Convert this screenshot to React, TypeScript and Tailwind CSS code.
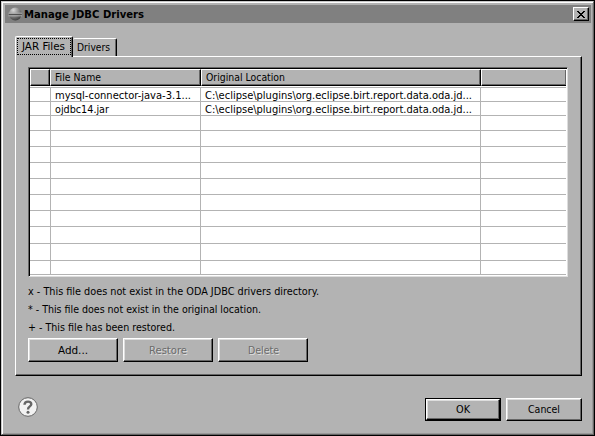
import React from "react";

const T = ({ w, children, className = "" }: { w: number; children: string; className?: string }) => (
  <svg width={w} height="15" className={"block shrink-0 overflow-visible " + className} fill="currentColor">
    <text x="0" y="11" textLength={w} lengthAdjust="spacingAndGlyphs">{children}</text>
  </svg>
);

const Btn = ({ label, w, className = "", disabled = false }: { label: string; w: number; className?: string; disabled?: boolean }) => (
  <button
    className={
      "flex items-center justify-center border border-t-white border-l-white border-r-black border-b-black shadow-[inset_-1px_-1px_0_#666,inset_1px_1px_0_#ddd] " +
      (disabled ? "text-[#6b6b6b] [text-shadow:1px_1px_0_#ddd] " : "text-black ") + className
    }
  >
    <T w={w}>{label}</T>
  </button>
);

const Head = ({ label, w = 0, className = "" }: { label?: string; w?: number; className?: string }) => (
  <div className={"flex h-[17px] shrink-0 items-center border border-t-white border-l-white border-r-black border-b-black bg-[#b3b3b3] pl-1 shadow-[inset_-1px_-1px_0_#666] " + className}>
    {label && <T w={w}>{label}</T>}
  </div>
);

const files = [
  ["mysql-connector-java-3.1...", 136],
  ["ojdbc14.jar", 54],
] as const;

const rowHeights = [
  "h-[14px]", "h-[14px]", "h-[15px]", "h-[16px]", "h-[16px]", "h-[16px]",
  "h-[16px]", "h-[16px]", "h-[16px]", "h-[17px]", "h-[17px]", "h-[14px]",
];

export default function App() {
  return (
    <div className="h-[436px] w-[595px] overflow-hidden border border-black bg-[#b3b3b3] font-['DejaVu_Sans_Condensed','DejaVu_Sans',sans-serif] text-[11px] leading-[14px] text-black">
      <div className="flex h-full flex-col border border-t-[#c8c8c8] border-l-[#c8c8c8] border-r-[#666] border-b-[#666] pt-[3px] pr-[2px] pl-[3px] shadow-[inset_1px_1px_0_#fff,inset_-1px_-1px_0_#999]">
        <header className="flex h-[18px] shrink-0 items-center bg-[#808080] pr-[2px] pl-[3px]">
          <svg width="14" height="14" viewBox="0 0 14 14">
            <defs>
              <radialGradient id="orb" cx=".35" cy=".2" r=".85">
                <stop stopColor="#d8d8d8" />
                <stop offset=".5" stopColor="#8a8a8a" />
                <stop offset="1" stopColor="#3c3c3c" />
              </radialGradient>
            </defs>
            <circle cx="7.3" cy="7" r="6.4" fill="url(#orb)" />
            <path d="M0.5 6.2h13.5M0.5 8.8h13.5" stroke="#bcbcbc" strokeWidth="0.9" />
            <path d="M1 7.5h12.5" stroke="#505050" strokeWidth="1.2" />
          </svg>
          <T w={120} className="ml-[2px] font-bold">Manage JDBC Drivers</T>
          <button className="ml-auto flex h-[14px] w-4 items-center justify-center border border-t-white border-l-white border-r-black border-b-black bg-[#b3b3b3] shadow-[inset_-1px_-1px_0_#666]">
            <svg width="8" height="7" viewBox="0 0 8 7" shapeRendering="crispEdges"><path d="M0 0h2v1h1v1h2V1h1V0h2v1H7v1H6v1H5v1h1v1h1v1h1v1H6V6H5V5H3v1H2v1H0V6h1V5h1V4h1V3H2V2H1V1H0z" /></svg>
          </button>
        </header>
        <main className="ml-[10px] flex w-[567px] flex-col pt-[13px]">
          <nav className="flex h-5 items-end">
            <div className="z-10 -mb-px h-[21px] w-[58px] rounded-t-[2px] border border-b-0 border-t-white border-l-white border-r-black bg-[#b3b3b3] p-px shadow-[inset_-1px_0_0_#666]">
              <div className="h-[17px] w-[54px] border border-dotted border-black pl-1"><T w={43}>JAR Files</T></div>
            </div>
            <div className="h-[18px] w-[44px] rounded-t-[2px] border border-b-0 border-t-white border-r-black border-l-0 pt-px pl-1 shadow-[inset_-1px_0_0_#666]"><T w={33}>Drivers</T></div>
          </nav>
          <section className="h-[320px] border border-t-white border-l-white border-r-black border-b-black pt-[10px] pl-3 shadow-[inset_-1px_-1px_0_#666]">
            <div className="h-[210px] w-[540px] border border-t-[#666] border-l-[#666] border-r-[#ddd] border-b-[#ddd]">
              <div className="h-[208px] w-[538px] border-t border-l border-black bg-white">
                <div className="flex">
                  <Head className="w-[20px]" />
                  <Head className="w-[151px]" label="File Name" w={46} />
                  <Head className="w-[280px]" label="Original Location" w={79} />
                  <Head className="w-[85px] border-r-0" />
                </div>
                <div className="h-px" />
                <div className="mr-px border-t border-[#b3b3b3]">
                  {rowHeights.map((h, i) => (
                    <div key={i} className={"flex border-b border-[#b3b3b3] " + h}>
                      <div className="w-[21px] border-r border-[#b3b3b3]" />
                      <div className="w-[150px] border-r border-[#b3b3b3] pl-1">{files[i] && <T w={files[i][1]}>{files[i][0]}</T>}</div>
                      <div className="w-[280px] border-r border-[#b3b3b3] pl-1">{files[i] && <T w={267}>{"C:\\eclipse\\plugins\\org.eclipse.birt.report.data.oda.jd..."}</T>}</div>
                    </div>
                  ))}
                </div>
              </div>
            </div>
            <div className="mt-[7px] flex flex-col gap-[3px]">
              <T w={291}>x - This file does not exist in the ODA JDBC drivers directory.</T>
              <T w={233}>* - This file does not exist in the original location.</T>
              <T w={147}>+ - This file has been restored.</T>
            </div>
            <div className="mt-[3px] flex gap-[5px]">
              <Btn label="Add..." w={30} className="h-6 w-[90px]" />
              <Btn label="Restore" w={38} disabled className="h-6 w-[90px]" />
              <Btn label="Delete" w={31} disabled className="h-6 w-[90px]" />
            </div>
          </section>
        </main>
        <footer className="mt-[22px] flex h-[23px] items-start pr-[9px] pl-[13px]">
          <svg width="20" height="20" viewBox="0 0 20 20" className="-mt-px">
            <circle cx="10" cy="10" r="9.3" fill="#f2f2f2" stroke="#666" />
            <path d="M6.5 7.7C6.7 3.7 13.4 3.7 13.3 7.3C13.2 9.5 10 9.4 10 12.4" fill="none" stroke="#666" strokeWidth="2.4" />
            <circle cx="10" cy="15.2" r="1.5" fill="#666" />
          </svg>
          <div className="ml-auto flex gap-[5px]">
            <div className="h-[23px] w-[76px] border border-black"><Btn label="OK" w={14} className="h-[21px] w-[74px]" /></div>
            <Btn label="Cancel" w={32} className="h-[23px] w-[76px]" />
          </div>
        </footer>
      </div>
    </div>
  );
}
